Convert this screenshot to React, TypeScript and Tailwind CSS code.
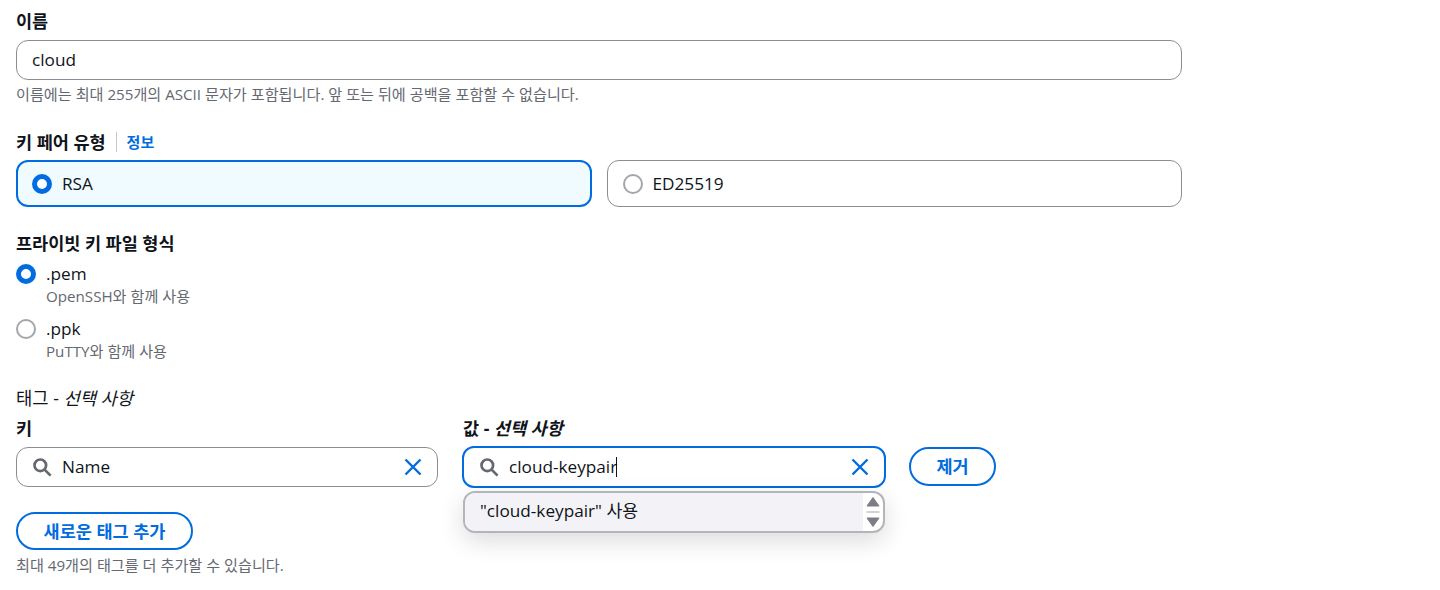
import React from 'react';

const font = { fontFamily: '"Open Sans", "Noto Sans CJK KR", sans-serif' };

const SearchIcon = () => (
    <svg width="20" height="20" viewBox="0 0 20 20" fill="none" stroke="#656871" strokeWidth="2.7">
        <circle cx="8.3" cy="8.3" r="5.8" />
        <path d="M12.6 12.6l6 6" />
    </svg>
);

const ClearIcon = () => (
    <svg width="18" height="18" viewBox="0 0 18 18" fill="none" stroke="#006ce0" strokeWidth="2.4">
        <path d="M1.5 1.5l15 15M16.5 1.5l-15 15" />
    </svg>
);

const Radio = ({ checked }: { checked?: boolean }) =>
    checked ? (
        <span className="block w-5 h-5 rounded-full border-[5px] border-[#006ce0] bg-white shrink-0" />
    ) : (
        <span className="block w-5 h-5 rounded-full border-2 border-[#a5a5ad] bg-white shrink-0" />
    );

const Hint = ({ children }: { children: React.ReactNode }) => (
    <p className="text-[15.15px] leading-5 text-[#656871]">{children}</p>
);

const Label = ({ children }: { children: React.ReactNode }) => (
    <div className="text-[17.5px] leading-5 font-bold text-[#0f141a]">{children}</div>
);

export default function App() {
    return (
        <div className="w-[1440px] h-[590px] bg-white pl-4 pt-[11px] overflow-hidden text-[#0f141a]" style={font}>
            <div className="w-[1166px]">
                <Label>이름</Label>
                <div className="mt-[9px] h-10 rounded-xl border border-[#8c8c94] flex items-center px-[15px] text-[17.2px]">
                    cloud
                </div>
                <div className="mt-1">
                    <Hint>이름에는 최대 255개의 ASCII 문자가 포함됩니다. 앞 또는 뒤에 공백을 포함할 수 없습니다.</Hint>
                </div>

                <div className="mt-[28px] flex items-center h-5">
                    <Label>키 페어 유형</Label>
                    <span className="mx-[10px] h-5 w-px bg-[#c6c6cd]" />
                    <span className="text-[15px] font-bold text-[#006ce0]">정보</span>
                </div>
                <div className="mt-2 grid grid-cols-2 gap-[15px]">
                    <div className="h-[47px] rounded-xl border-2 border-[#006ce0] bg-[#f0fbff] flex items-center gap-[10px] pl-[14px] text-[17.2px]">
                        <Radio checked />
                        RSA
                    </div>
                    <div className="h-[47px] rounded-xl border border-[#8c8c94] flex items-center gap-[10px] pl-[15px] text-[17.2px]">
                        <Radio />
                        ED25519
                    </div>
                </div>

                <div className="mt-[26px]">
                    <Label>프라이빗 키 파일 형식</Label>
                </div>
                <div className="mt-[11px] flex gap-[10px] items-start">
                    <Radio checked />
                    <div>
                        <div className="text-[17.2px] leading-5">.pem</div>
                        <div className="mt-[2px]">
                            <Hint>OpenSSH와 함께 사용</Hint>
                        </div>
                    </div>
                </div>
                <div className="mt-[13px] flex gap-[10px] items-start">
                    <Radio />
                    <div>
                        <div className="text-[17.2px] leading-5">.ppk</div>
                        <div className="mt-[2px]">
                            <Hint>PuTTY와 함께 사용</Hint>
                        </div>
                    </div>
                </div>

                <div className="mt-[27px] text-[17.7px] leading-5">
                    태그 - <i>선택 사항</i>
                </div>

                <div className="mt-[10px] flex items-start">
                    <div className="w-[422px]">
                        <Label>키</Label>
                        <div className="mt-[9px] h-10 rounded-xl border border-[#8c8c94] flex items-center pl-[15px] pr-[15px] text-[17.2px]">
                            <SearchIcon />
                            <span className="ml-[10px] flex-1">Name</span>
                            <ClearIcon />
                        </div>
                    </div>
                    <div className="ml-[24px] w-[424px] relative">
                        <div className="pl-px">
                            <Label>
                                값 - <i>선택 사항</i>
                            </Label>
                        </div>
                        <div className="mt-2 h-[42px] rounded-xl border-2 border-[#006ce0] flex items-center pl-[15px] pr-[15px] text-[17.2px]">
                            <SearchIcon />
                            <span className="ml-[10px] flex-1 flex items-center">
                                cloud-keypair
                                <span className="inline-block w-px h-5 bg-[#0f141a] -ml-px" />
                            </span>
                            <ClearIcon />
                        </div>
                        <div className="absolute left-[1px] right-[1px] top-[73px] h-[42px] rounded-xl border-2 border-[#b4b4bb] bg-white overflow-hidden flex shadow-[0_8px_24px_rgba(0,7,22,0.14)]">
                            <div className="flex-1 bg-[#f3f3f7] flex items-center pl-[15px] pb-[3px] text-[17.2px]">
                                "cloud-keypair" 사용
                            </div>
                            <div className="w-5 flex flex-col items-center justify-center">
                                <svg width="14" height="32" viewBox="0 0 14 32">
                                    <path d="M7 1.5l6 8.5H1z" fill="#7d7d85" stroke="#7d7d85" strokeLinejoin="round" />
                                    <path d="M0.5 16h13" stroke="#a5a5ad" />
                                    <path d="M1 22h12L7 30.5z" fill="#7d7d85" stroke="#7d7d85" strokeLinejoin="round" />
                                </svg>
                            </div>
                        </div>
                    </div>
                    <button className="ml-[23px] mt-[29px] w-[87px] h-[39px] rounded-full border-2 border-[#006ce0] text-[#006ce0] text-[17.5px] font-bold bg-white">
                        제거
                    </button>
                </div>

                <button className="mt-[24px] block w-[177px] h-[38px] rounded-full border-2 border-[#006ce0] text-[#006ce0] text-[17.5px] font-bold bg-white">
                    새로운 태그 추가
                </button>
                <div className="mt-[5px]">
                    <Hint>최대 49개의 태그를 더 추가할 수 있습니다.</Hint>
                </div>
            </div>
        </div>
    );
}
